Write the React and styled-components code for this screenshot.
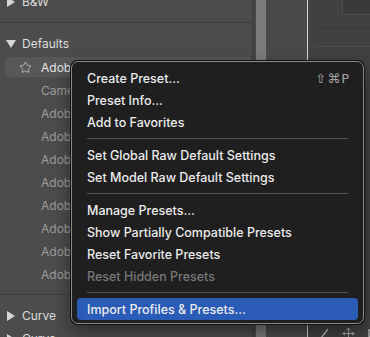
import React from 'react'
import styled, { createGlobalStyle } from 'styled-components'
import { Star, Move } from 'lucide-react'

const GlobalStyle = createGlobalStyle`
	html, body {
		margin: 0;
		padding: 0;
		background: #4b4b4b;
		overflow: hidden;
	}
	* { box-sizing: border-box; }
`

const presets = ['Camera', 'Adobe', 'Adobe', 'Adobe', 'Adobe', 'Adobe', 'Adobe', 'Adobe', 'Adobe']

const menu = [
	{ label: 'Create Preset...', shortcut: '⇧⌘P' },
	{ label: 'Preset Info...' },
	{ label: 'Add to Favorites' },
	'sep',
	{ label: 'Set Global Raw Default Settings' },
	{ label: 'Set Model Raw Default Settings' },
	'sep',
	{ label: 'Manage Presets...' },
	{ label: 'Show Partially Compatible Presets' },
	{ label: 'Reset Favorite Presets' },
	{ label: 'Reset Hidden Presets', disabled: true },
	'sep',
	{ label: 'Import Profiles & Presets...', active: true },
]

const App = () => (
	<>
		<GlobalStyle />
		<Screen>
			<PresetList>
				<GroupRow first>
					<Caret />
					<GroupName>B&amp;W</GroupName>
				</GroupRow>
				<Rule />
				<GroupRow>
					<Caret open />
					<GroupName>Defaults</GroupName>
				</GroupRow>
				<PresetRow selected>
					<StarIcon><Star size={13} strokeWidth={1.4} /></StarIcon>
					<PresetName selected>Adobe</PresetName>
				</PresetRow>
				{ presets.map((name, i) => (
					<PresetRow key={ i }>
						<PresetName>{ name }</PresetName>
					</PresetRow>
				)) }
				<Rule />
				<GroupRow>
					<Caret />
					<GroupName>Curve</GroupName>
				</GroupRow>
				<GroupRow>
					<Caret />
					<GroupName>Curve</GroupName>
				</GroupRow>
			</PresetList>
			<ScrollTrack>
				<ScrollThumb />
			</ScrollTrack>
			<MidPanel />
			<Divider />
			<SidePanel>
				<SideTop>
					<SideBox />
				</SideTop>
				<SideBand />
				<SideFill />
				<SideTools>
					<svg width="10" height="12" viewBox="0 0 10 12">
						<path d="M1 11 L8 2" stroke="#bdbdbd" strokeWidth="1.3" fill="none" />
					</svg>
					<Move size={13} color="#bdbdbd" strokeWidth={1.6} />
					<svg width="10" height="12" viewBox="0 0 10 12">
						<path d="M9 3 H2 V10 H9" stroke="#bdbdbd" strokeWidth="1.3" fill="none" />
					</svg>
				</SideTools>
			</SidePanel>
			<Menu>
				{ menu.map((item, i) => item === 'sep'
					? <MenuSeparator key={ i } />
					: (
						<MenuItem key={ i } active={ item.active } disabled={ item.disabled }>
							<span>{ item.label }</span>
							{ item.shortcut && <Shortcut>{ item.shortcut }</Shortcut> }
						</MenuItem>
					)
				) }
			</Menu>
		</Screen>
	</>
)

const Screen = styled.div`
	position: relative;
	display: flex;
	width: 370px;
	height: 337px;
	overflow: hidden;
	font-family: Inter, "Liberation Sans", sans-serif;
`

const PresetList = styled.div`
	display: flex;
	flex-direction: column;
	width: 252px;
	flex-shrink: 0;
	background: #4c4c4c;
`

const GroupRow = styled.div`
	display: flex;
	align-items: center;
	height: 23px;
	flex-shrink: 0;
	padding-left: 7px;
	margin-top: ${ ({ first }) => first ? '-10px' : '0' };
`

const Caret = styled.span`
	width: 0;
	height: 0;
	margin-right: ${ ({ open }) => open ? '6px' : '7px' };
	margin-left: ${ ({ open }) => open ? '-1px' : '0' };
	${ ({ open }) => open
		? `border-left: 5px solid transparent;
		   border-right: 5px solid transparent;
		   border-top: 8px solid #d6d6d6;`
		: `border-top: 5px solid transparent;
		   border-bottom: 5px solid transparent;
		   border-left: 8px solid #d6d6d6;`
	}
`

const GroupName = styled.span`
	color: #dedede;
	font-size: 12px;
`

const Rule = styled.div`
	height: 1px;
	flex-shrink: 0;
	margin: 9px 0;
	background: #3e3e3e;
`

const PresetRow = styled.div`
	display: flex;
	align-items: center;
	height: 23px;
	flex-shrink: 0;
	padding-left: ${ ({ selected }) => selected ? '14px' : '36px' };
	margin-left: 5px;
	border-top: 2px solid #4c4c4c;
	border-bottom: 1px solid #4c4c4c;
	border-radius: 5px;
	background: ${ ({ selected }) => selected ? '#575757' : 'transparent' };
`

const StarIcon = styled.span`
	display: flex;
	color: #cfcfcf;
	margin-right: 9px;
`

const PresetName = styled.span`
	color: ${ ({ selected }) => selected ? '#e4e4e4' : '#9c9c9c' };
	font-size: 12px;
`

const ScrollTrack = styled.div`
	width: 14px;
	flex-shrink: 0;
	display: flex;
	padding-left: 3px;
	border-left: 1px solid #3b3b3b;
	background: #474747;
`

const ScrollThumb = styled.div`
	width: 11px;
	background: #7b7b7b;
`

const MidPanel = styled.div`
	width: 41px;
	flex-shrink: 0;
	background: #4a4a4a;
`

const Divider = styled.div`
	width: 1px;
	flex-shrink: 0;
	background: #d4d4d4;
`

const SidePanel = styled.div`
	flex: 1;
	display: flex;
	flex-direction: column;
	background: #414141;
`

const SideTop = styled.div`
	height: 15px;
	display: flex;
	justify-content: flex-end;
`

const SideBox = styled.div`
	width: 35px;
	background: #393939;
	border-left: 1px solid #4d4d4d;
	border-bottom: 1px solid #4d4d4d;
`

const SideBand = styled.div`
	height: 20px;
	margin-left: 7px;
	border-bottom: 1px solid #4e4e4e;
	border-top: 1px solid #383838;
	margin-top: 12px;
`

const SideFill = styled.div`
	flex: 1;
`

const SideTools = styled.div`
	display: flex;
	align-items: center;
	gap: 12px;
	height: 16px;
	padding-left: 12px;
	margin-bottom: -4px;
`

const Menu = styled.div`
	position: absolute;
	left: 71px;
	top: 61px;
	width: 293px;
	padding: 5px 5px 3px;
	display: flex;
	flex-direction: column;
	background: #1f1f1f;
	border: 1px solid #8a8a8a;
	border-radius: 7px;
	box-shadow: 0 0 0 1px #111, 0 8px 20px rgba(0, 0, 0, 0.45);
`

const MenuItem = styled.div`
	display: flex;
	align-items: center;
	justify-content: space-between;
	height: 22px;
	padding: 0 8px 0 10px;
	border-radius: 4px;
	font-size: 12.5px;
	font-weight: 500;
	color: ${ ({ disabled }) => disabled ? '#777777' : '#ebebeb' };
	background: ${ ({ active }) => active ? '#2a5bb7' : 'transparent' };
`

const Shortcut = styled.span`
	color: #a3a3a3;
	font-family: "DejaVu Sans", sans-serif;
	font-size: 13px;
	letter-spacing: 1px;
`

const MenuSeparator = styled.div`
	height: 1px;
	margin: 5px 10px;
	background: #555555;
`

export default App
